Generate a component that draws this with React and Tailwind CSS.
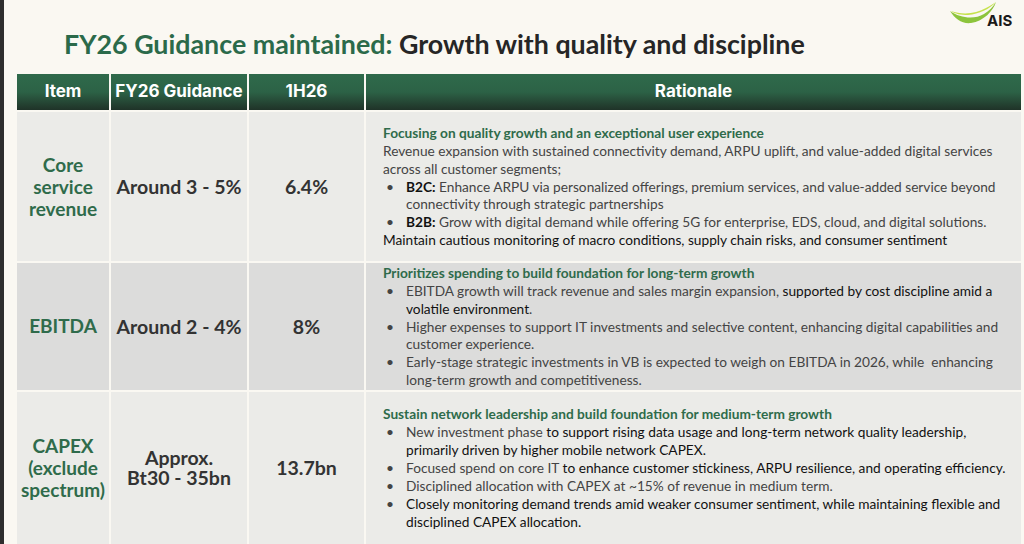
import React from "react";

const G = "text-[#2f6b4b]";

function Bullet({ children }) {
  return (
    <div className="flex">
      <span className="w-[23px] shrink-0 pl-[3px]">•</span>
      <span>{children}</span>
    </div>
  );
}

const gray = "text-[#444]";
const dark = "text-[#111]";
const body = "flex flex-col justify-center pl-[17px] pr-[4px] text-[13.7px] leading-[17.9px]";

export default function App() {
  return (
    <div className="w-[1024px] h-[544px] overflow-hidden flex bg-[#faf8f2]" style={{ fontFamily: "Lato, 'Open Sans', sans-serif" }}>
      <div className="w-[4px] shrink-0 bg-[#2e2e2e]" />
      <div className="relative flex-1 flex flex-col">
        {/* logo */}
        <div className="absolute left-[944px] top-[1px] w-[76px] h-[30px]">
          <svg width="50" height="24" viewBox="0 0 50 24" className="absolute left-0 top-0">
            <path d="M2 10 C12 17 26 19 36 13 C41 10 45 6 48 1 C45 10 36 20 23 22 C14 23 7 18 2 10 Z" fill="#8cc43c" />
            <path d="M3 10 C14 14 28 13 38 7 C42 5 45 3 48 1 C42 8 31 13 20 14 C13 14 7 13 3 10 Z" fill="#c6e24c" />
          </svg>
          <span className="absolute left-[39px] top-[12px] text-[15px] font-bold text-[#1a1a1a] leading-none" style={{ fontFamily: "Inter, sans-serif" }}>AIS</span>
        </div>

        <div className="h-[75px] pl-[60px] pt-[29px] text-[26.8px] font-bold leading-[30px]">
          <span className="text-[#2b6a4a]">FY26 Guidance maintained: </span>
          <span className="text-[#262626]">Growth with quality and discipline</span>
        </div>

        <div className="ml-[13px] mr-[3px] grid grid-cols-[92px_136px_115px_1fr] gap-x-[2px] gap-y-[2px]">
          {["Item", "FY26 Guidance", "1H26", "Rationale"].map((h) => (
            <div
              key={h}
              className="h-[36px] flex items-center justify-center text-white font-bold text-[17px] bg-gradient-to-b from-[#2f6a4b] via-[#2c6246] to-[#1f3328]"
              style={{ fontFamily: "Inter, sans-serif" }}
            >
              {h}
            </div>
          ))}

          {/* row 1 */}
          <div className={`h-[149px] bg-[#ebebe8] flex items-center justify-center text-center font-bold text-[19px] leading-[22px] ${G}`}>
            Core<br />service<br />revenue
          </div>
          <div className="bg-[#ebebe8] flex items-center justify-center font-bold text-[19.5px] text-[#333]">Around 3 - 5%</div>
          <div className="bg-[#ebebe8] flex items-center justify-center font-bold text-[19.5px] text-[#333]">6.4%</div>
          <div className={`bg-[#ebebe8] ${body} ${gray}`}>
            <div className={`font-bold ${G}`}>Focusing on quality growth and an exceptional user experience</div>
            <div>Revenue expansion with sustained connectivity demand, ARPU uplift, and value-added digital services across all customer segments;</div>
            <Bullet><b className={dark}>B2C:</b> Enhance ARPU via personalized offerings, premium services, and value-added service beyond connectivity through strategic partnerships</Bullet>
            <Bullet><b className={dark}>B2B:</b> Grow with digital demand while offering 5G for enterprise, EDS, cloud, and digital solutions.</Bullet>
            <div className={dark}>Maintain cautious monitoring of macro conditions, supply chain risks, and consumer sentiment</div>
          </div>

          {/* row 2 */}
          <div className={`h-[127px] bg-[#dcdcdb] flex items-center justify-center text-center font-bold text-[19px] ${G}`}>EBITDA</div>
          <div className="bg-[#dcdcdb] flex items-center justify-center font-bold text-[19.5px] text-[#333]">Around 2 - 4%</div>
          <div className="bg-[#dcdcdb] flex items-center justify-center font-bold text-[19.5px] text-[#333]">8%</div>
          <div className={`bg-[#dcdcdb] ${body} ${gray}`}>
            <div className={`font-bold ${G}`}>Prioritizes spending to build foundation for long-term growth</div>
            <Bullet>EBITDA growth will track revenue and sales margin expansion, <span className={dark}>supported by cost discipline amid a volatile environment</span>.</Bullet>
            <Bullet>Higher expenses to support IT investments and selective content, enhancing digital capabilities and customer experience.</Bullet>
            <Bullet>Early-stage strategic investments in VB is expected to weigh on EBITDA in 2026, while&nbsp; enhancing long-term growth and competitiveness.</Bullet>
          </div>

          {/* row 3 */}
          <div className={`h-[152px] bg-[#ebebe8] flex items-center justify-center text-center font-bold text-[19px] leading-[22px] ${G}`}>
            CAPEX<br />(exclude<br />spectrum)
          </div>
          <div className="bg-[#ebebe8] flex items-center justify-center text-center font-bold text-[19.5px] leading-[20px] text-[#333]">Approx.<br />Bt30 - 35bn</div>
          <div className="bg-[#ebebe8] flex items-center justify-center font-bold text-[19.5px] text-[#333]">13.7bn</div>
          <div className={`bg-[#ebebe8] ${body} ${gray}`}>
            <div className={`font-bold ${G}`}>Sustain network leadership and build foundation for medium-term growth</div>
            <Bullet>New investment phase <span className={dark}>to support rising data usage and long-term network quality leadership, primarily driven by higher mobile network CAPEX.</span></Bullet>
            <Bullet>Focused spend on core IT <span className={dark}>to enhance customer stickiness, ARPU resilience, and operating efficiency.</span></Bullet>
            <Bullet>Disciplined allocation with CAPEX at ~15% of revenue in medium term.</Bullet>
            <Bullet><span className={dark}>Closely monitoring demand trends amid weaker consumer sentiment, while maintaining flexible and disciplined CAPEX allocation.</span></Bullet>
          </div>
        </div>
      </div>
    </div>
  );
}
